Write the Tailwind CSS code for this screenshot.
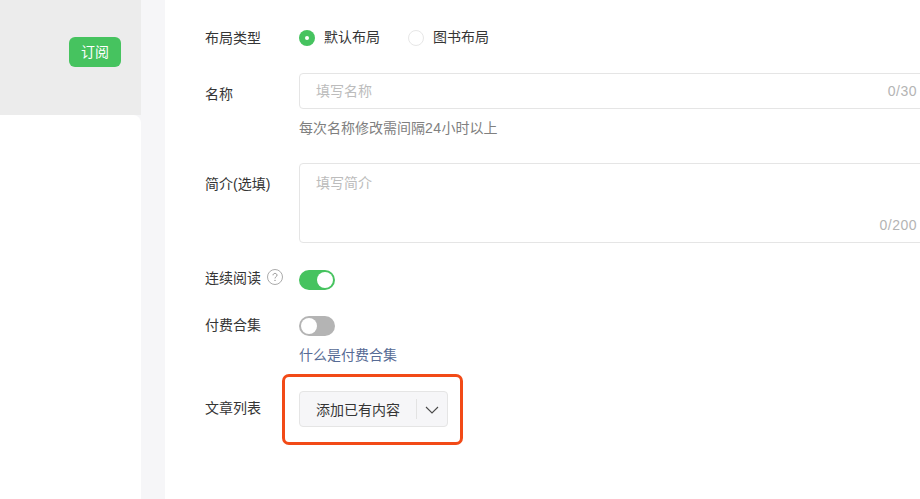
<!DOCTYPE html>
<html lang="zh-CN">
  <head>
    <meta charset="UTF-8" />
    <meta name="viewport" content="width=device-width, initial-scale=1.0" />
    <script src="https://cdn.jsdelivr.net/npm/@tailwindcss/browser@4"></script>
    <title>新建合集</title>
  </head>
  <body class="bg-[#f6f6f8] font-['Liberation_Sans','Noto_Sans_CJK_SC',sans-serif] text-[14px] text-[#353535]">
    <div class="flex h-[499px] w-[920px] overflow-hidden">
      <!-- left column -->
      <aside class="flex w-[141px] shrink-0 flex-col">
        <div class="flex h-[115px] items-start justify-end bg-[#ececec] pt-[37px] pr-[20px]">
          <button class="h-[30px] w-[52px] rounded-[6px] bg-[#46c35f] text-center text-[14px] leading-[30px] text-white">订阅</button>
        </div>
        <div class="flex-1 rounded-tr-[8px] bg-white"></div>
      </aside>

      <!-- form -->
      <main class="relative ml-[24px] w-[755px] shrink-0 overflow-hidden bg-white pl-[40px] pt-[28px]">
        <div class="flex h-[20px] items-center">
          <span class="w-[94px] shrink-0 leading-[20px]">布局类型</span>
          <span class="flex h-[16px] w-[16px] items-center justify-center rounded-full bg-[#46c35f]"><span class="h-[4px] w-[4px] rounded-full bg-white"></span></span>
          <span class="ml-[9px] -translate-y-[1px]">默认布局</span>
          <span class="ml-[28px] h-[16px] w-[16px] rounded-full border border-[#e7e7e7]"></span>
          <span class="ml-[9px] -translate-y-[1px]">图书布局</span>
        </div>

        <div class="mt-[25px] flex">
          <span class="w-[94px] shrink-0 pt-[11px] leading-[20px]">名称</span>
          <div class="shrink-0">
            <div class="flex h-[36px] w-[700px] items-center justify-between rounded-[4px] border border-[#e5e5e5] pl-[16px] pr-[81px]">
              <span class="text-[#bcbcbc]">填写名称</span>
              <span class="tracking-[0.5px] text-[#b4b4b4]">0/30</span>
            </div>
            <p class="mt-[9px] leading-[20px] text-[#808080]">每次名称修改需间隔<span class="tracking-[0.5px]">24</span>小时以上</p>
          </div>
        </div>

        <div class="mt-[25px] flex">
          <span class="w-[94px] shrink-0 pt-[11px] leading-[20px]">简介(选填)</span>
          <div class="relative h-[80px] w-[700px] shrink-0 rounded-[4px] border border-[#e5e5e5] pl-[16px] pt-[9px]">
            <span class="leading-[20px] text-[#bcbcbc]">填写简介</span>
            <span class="absolute bottom-[6px] right-[81px] tracking-[0.5px] text-[#b4b4b4]">0/200</span>
          </div>
        </div>

        <div class="mt-[27px] flex h-[20px] items-center">
          <span class="flex w-[94px] shrink-0 -translate-y-[2px] items-center leading-[20px]">连续阅读
            <svg class="ml-[6px] -translate-y-[1px]" width="16" height="16" viewBox="0 0 16 16" fill="none">
              <circle cx="8" cy="8" r="7.5" stroke="#ababab" />
              <path d="M6 6.3c0-1.1.9-1.9 2-1.9s2 .8 2 1.8c0 1.5-2 1.6-2 3.2" stroke="#949494" stroke-width="1" />
              <circle cx="8" cy="11.4" r=".7" fill="#949494" />
            </svg>
          </span>
          <span class="flex h-[20px] w-[36px] items-center justify-end rounded-full bg-[#46c35f] pr-[2px]"><span class="h-[16px] w-[16px] rounded-full bg-white"></span></span>
        </div>

        <div class="mt-[26px] flex h-[20px] items-center">
          <span class="w-[94px] shrink-0 -translate-y-[1px] leading-[20px]">付费合集</span>
          <span class="flex h-[20px] w-[36px] items-center rounded-full bg-[#b4b4b4] pl-[2px]"><span class="h-[16px] w-[16px] rounded-full bg-white"></span></span>
        </div>

        <a class="mt-[9px] ml-[94px] block leading-[20px] text-[#576b95]">什么是付费合集</a>

        <div class="mt-[26px] flex">
          <span class="w-[94px] shrink-0 pt-[7px] leading-[20px]">文章列表</span>
          <div class="flex h-[36px] w-[149px] items-center rounded-[4px] border border-[#e5e5e5] bg-[#f6f6f8]">
            <span class="ml-[16px] w-[100px] shrink-0 translate-y-[1px] text-[#353535]">添加已有内容</span>
            <span class="h-[20px] w-px bg-[#e3e3e3]"></span>
            <svg class="ml-[8px] translate-y-[1px]" width="14" height="8" viewBox="0 0 14 8" fill="none"><path d="M1 1l6 6 6-6" stroke="#4a4a4a" stroke-width="1.1" /></svg>
          </div>
        </div>

        <!-- red annotation round the list button -->
        <div class="absolute left-[117px] top-[374px] h-[71px] w-[181px] rounded-[7px] border-[3px] border-[#f24a17]"></div>
      </main>
    </div>
  </body>
</html>
